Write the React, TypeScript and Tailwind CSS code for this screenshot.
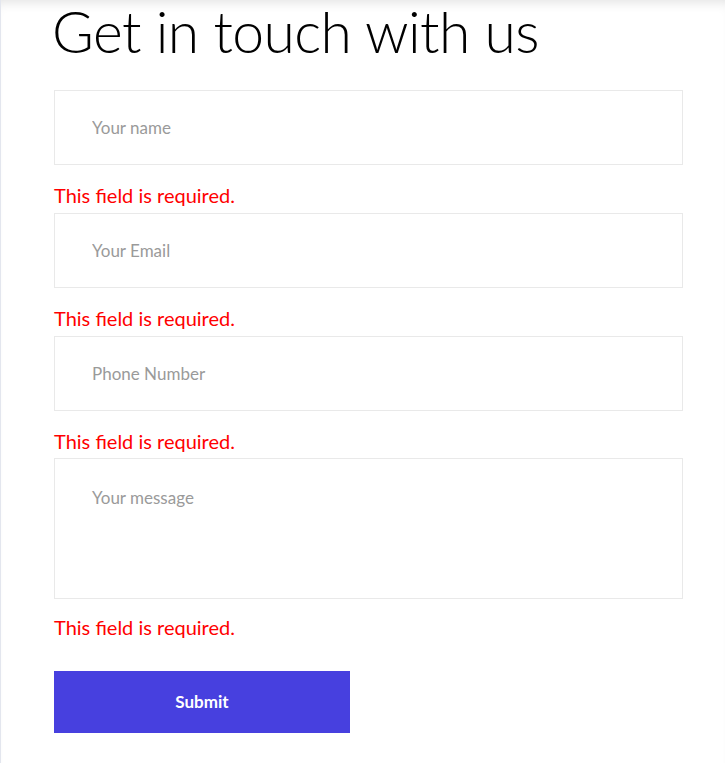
import React, { useState } from "react";

const fields = [
  { name: "name", placeholder: "Your name" },
  { name: "email", placeholder: "Your Email" },
  { name: "phone", placeholder: "Phone Number" },
];

const font = { fontFamily: "Lato, 'Open Sans', sans-serif" };

const App = () => {
  const [values, setValues] = useState<Record<string, string>>({});

  const update = (key: string, v: string) =>
    setValues((prev) => ({ ...prev, [key]: v }));

  return (
    <div
      style={font}
      className="min-h-screen bg-white border-l border-[#e3e6ee] pl-[51px] pr-[42px] shadow-[inset_0_10px_12px_-8px_rgba(0,0,0,0.12)]"
    >
      <h1 className="text-[57px] leading-[62px] text-black font-light tracking-[-0.6px]">
        Get in touch with us
      </h1>
      <form className="ml-[2px] mt-[28px] flex flex-col" onSubmit={(e) => e.preventDefault()}>
        {fields.map((f) => (
          <div key={f.name} className="flex flex-col">
            <input
              type="text"
              value={values[f.name] ?? ""}
              placeholder={f.placeholder}
              onChange={(e) => update(f.name, e.target.value)}
              className="h-[75px] w-full border border-[#e9e9e9] px-[37px] text-[17px] text-[#333] placeholder:text-[#9a9a9a] outline-none"
            />
            <p className="h-[48px] pt-[19px] text-[20px] leading-[22px] text-[#ff0000]">
              This field is required.
            </p>
          </div>
        ))}
        <textarea
          value={values.message ?? ""}
          placeholder="Your message"
          onChange={(e) => update("message", e.target.value)}
          className="-mt-[1px] h-[141px] w-full resize-none border border-[#e9e9e9] px-[37px] pt-[26px] text-[17px] text-[#333] placeholder:text-[#9a9a9a] outline-none"
        />
        <p className="pt-[17px] text-[20px] leading-[22px] text-[#ff0000]">
          This field is required.
        </p>
        <button
          type="submit"
          className="mt-[33px] h-[62px] w-[296px] bg-[#4740df] text-[17px] font-bold text-white"
        >
          Submit
        </button>
      </form>
    </div>
  );
};

export default App;
